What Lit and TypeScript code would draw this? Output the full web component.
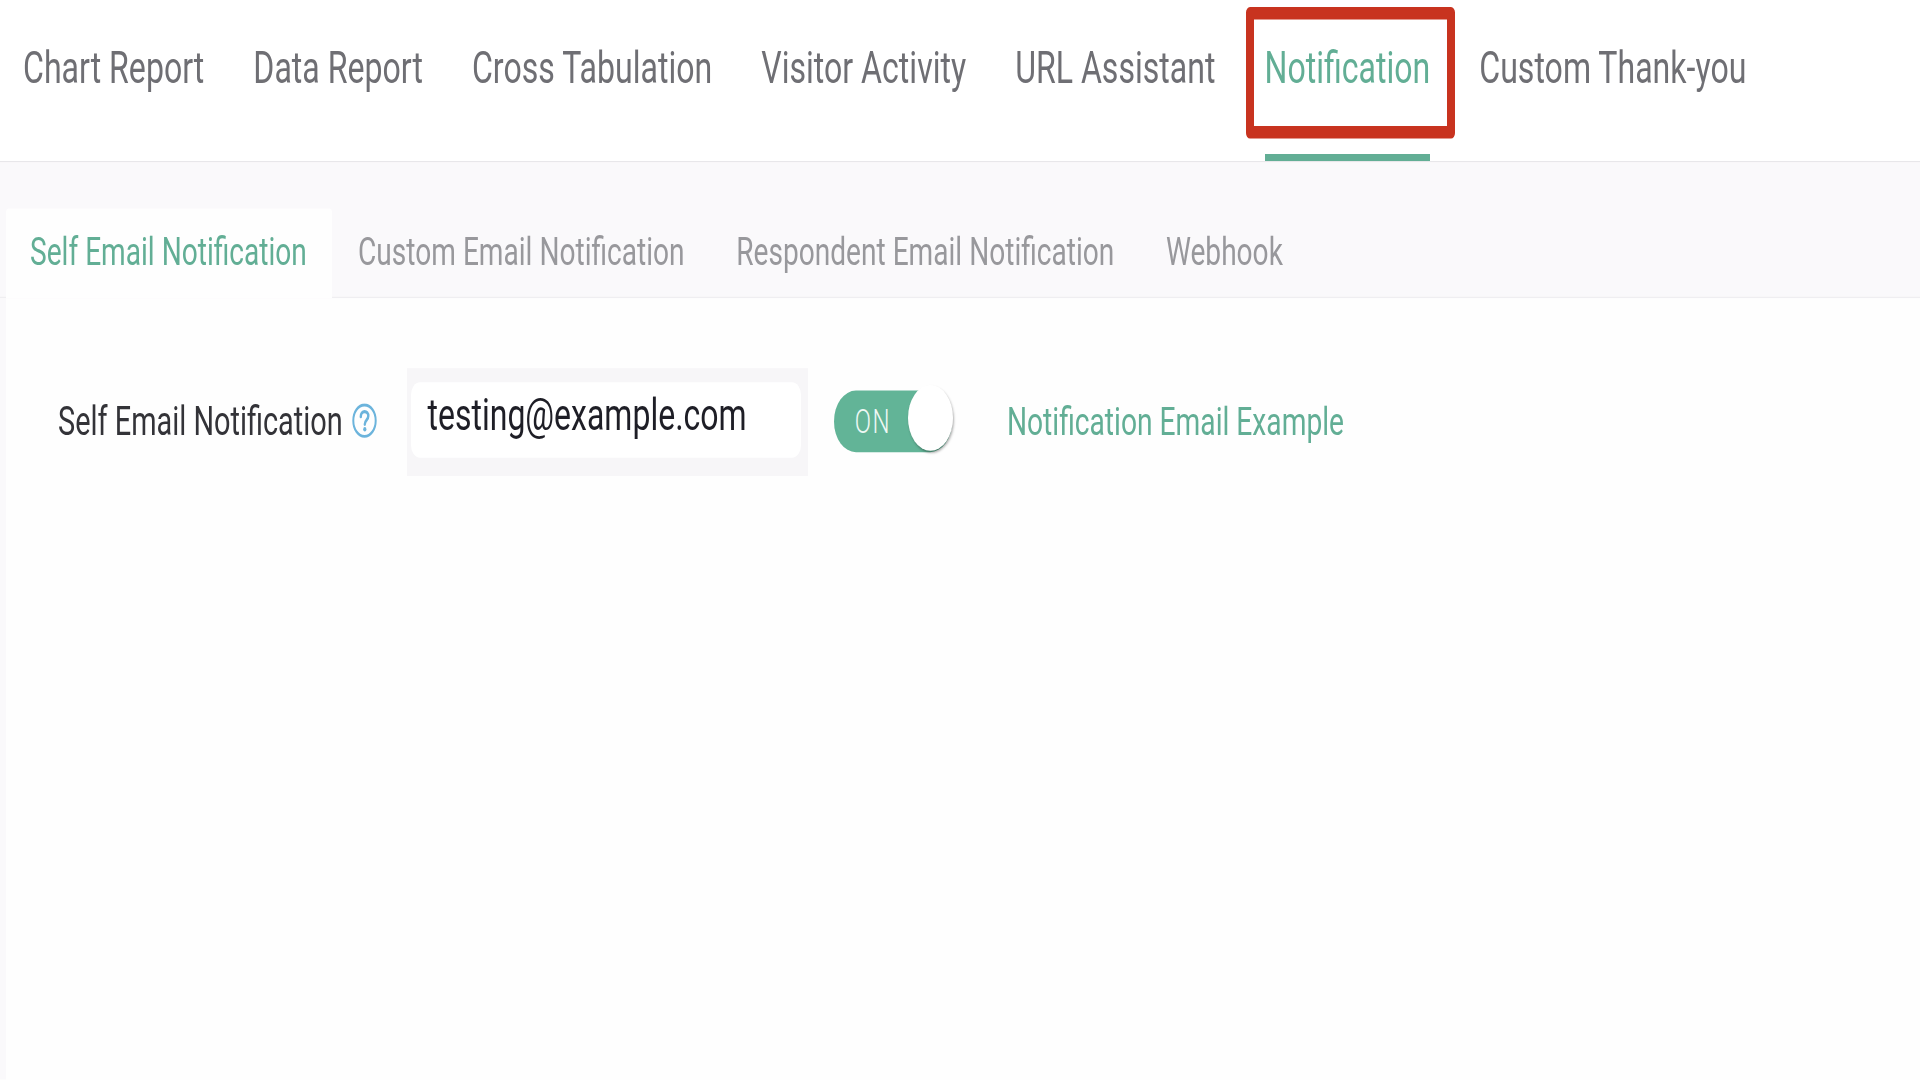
import { LitElement, html, css } from "lit";
import { customElement } from "lit/decorators.js";

const TOP = ["Chart Report", "Data Report", "Cross Tabulation", "Visitor Activity", "URL Assistant", "Notification", "Custom Thank-you"];
const SUB = ["Self Email Notification", "Custom Email Notification", "Respondent Email Notification", "Webhook"];

@customElement("app-root")
export class AppRoot extends LitElement {
  static styles = css`
    :host { display: block; width: 1920px; height: 1080px; overflow: hidden; background: #fefefe; font-family: Roboto, "Liberation Sans", sans-serif; }
    .page { width: 1920px; height: 771.4px; transform: scaleY(1.4); transform-origin: top left; display: flex; flex-direction: column; }
    .top { height: 115px; flex: none; display: flex; gap: 49px; padding-left: 23px; background: #fff; border-bottom: 1.4px solid #e8e7ea; }
    .top-item { position: relative; font-size: 32.1px; line-height: 97.5px; color: #6f6f74; height: 115px; white-space: nowrap; }
    .top-item.active { color: #62ae95; }
    .top-item.active::after { content: ""; position: absolute; left: 0; right: 0; bottom: 0; height: 5px; background: #62ae95; }
    .mark { position: absolute; left: -19px; top: 5px; width: 209px; height: 94px; box-sizing: border-box; border: solid #c8331f; border-width: 9px 8.5px; border-radius: 4px; }
    .band { height: 97px; flex: none; display: flex; align-items: flex-end; padding-left: 6px; background: #faf9fb; border-bottom: 1px solid #efeef1; box-sizing: border-box; }
    .sub { font-size: 28.1px; height: 63.25px; line-height: 62px; padding: 0 25.8px; color: #98989c; white-space: nowrap; }
    .sub.active { color: #62ae95; background: #fefefe; padding: 0 25.4px 0 24px; margin-bottom: -1px; height: 64.25px; border-radius: 3px 3px 0 0; }
    .body { flex: 1; margin-left: 6px; background: #fefefe; box-shadow: -6px 0 0 #faf9fb; }
    .row { display: flex; align-items: flex-start; padding-top: 50px; }
    .label { margin-left: 52px; font-size: 28.9px; color: #333338; line-height: 68px; white-space: nowrap; margin-top: 3.6px; display: flex; align-items: center; }
    .help { margin-left: 9.5px; width: 25px; height: 25px; flex: none; }
    .input-wrap { margin-left: 29.3px; width: 401px; height: 77px; box-sizing: border-box; padding: 10px 7px 13px 4px; background: #f7f6f8; }
    .input { height: 54px; background: #fff; border-radius: 9px; padding-left: 17px; font-size: 32px; line-height: 46.5px; color: #1e1e26; }
    .toggle { position: relative; margin: 16px 0 0 26.2px; width: 118px; height: 44px; background: #62b497; border-radius: 22px; color: #eef8f4; font-size: 24px; font-weight: 300; line-height: 44px; padding-left: 21px; box-sizing: border-box; letter-spacing: 1.5px; }
    .knob { position: absolute; right: -1px; top: -4px; width: 45px; height: 47px; border-radius: 50%; background: #fff; box-shadow: 1px 1.5px 2px rgba(0,0,0,.3); }
    .link { margin: 4.6px 0 0 55.2px; font-size: 28.2px; color: #62ae95; line-height: 68px; white-space: nowrap; }
  `;

  render() {
    return html`<div class="page">
      <nav class="top">
        ${TOP.map((t) => html`<div class="top-item ${t === "Notification" ? "active" : ""}">${t}${t === "Notification" ? html`<div class="mark"></div>` : ""}</div>`)}
      </nav>
      <div class="band">
        ${SUB.map((t, i) => html`<div class="sub ${i === 0 ? "active" : ""}">${t}</div>`)}
      </div>
      <div class="body">
        <div class="row">
          <div class="label">Self Email Notification
            <svg class="help" viewBox="0 0 25 25" fill="none">
              <circle cx="12.5" cy="12.5" r="11.2" stroke="#6cb4dc" stroke-width="2"/>
              <path d="M8.8 9.6c0-2.2 1.7-3.6 3.8-3.6s3.7 1.3 3.7 3.2c0 2.7-3.5 2.9-3.5 5.8" stroke="#6cb4dc" stroke-width="2.4" stroke-linecap="round"/>
              <circle cx="12.8" cy="18.6" r="1.6" fill="#6cb4dc"/>
            </svg>
          </div>
          <div class="input-wrap"><div class="input">testing@example.com</div></div>
          <div class="toggle">ON<div class="knob"></div></div>
          <div class="link">Notification Email Example</div>
        </div>
      </div>
    </div>`;
  }
}
